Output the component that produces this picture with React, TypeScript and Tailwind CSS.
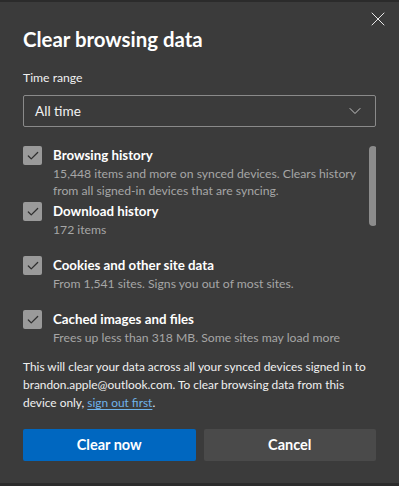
import { X, ChevronDown, Check } from "lucide-react";

const items = [
  {
    title: "Browsing history",
    desc: "15,448 items and more on synced devices. Clears history from all signed-in devices that are syncing.",
  },
  { title: "Download history", desc: "172 items" },
  { title: "Cookies and other site data", desc: "From 1,541 sites. Signs you out of most sites." },
  { title: "Cached images and files", desc: "Frees up less than 318 MB. Some sites may load more slowly on your next visit." },
];

function Item({ title, desc, gap }: { title: string; desc: string; gap: string }) {
  return (
    <div className={`flex gap-[11px] ${gap}`}>
      <span className="mt-[1px] flex h-[19px] w-[19px] shrink-0 items-center justify-center rounded-[2px] bg-[#9a9a9a]">
        <Check className="h-[14px] w-[14px] text-[#2f2f2f]" strokeWidth={2.2} />
      </span>
      <div className="min-w-0 pr-[20px]">
        <p className="text-[13.3px] font-bold leading-[20px] text-white">{title}</p>
        <p className="text-[12.2px] leading-[17px] text-[#a6a6a6]">{desc}</p>
      </div>
    </div>
  );
}

export default function App() {
  return (
    <div
      className="flex h-[486px] w-[399px] flex-col bg-[#3b3b3b] text-white"
      style={{ fontFamily: 'Lato, "Noto Sans", sans-serif' }}
    >
      <div className="h-[2px] w-full bg-[#2b2b2b]" />
      <div className="relative flex flex-1 flex-col px-[23px] pt-[24px]">
        <button className="absolute right-[9px] top-[5px] text-[#e8e8e8]">
          <X className="h-[24px] w-[24px]" strokeWidth={1} />
        </button>
        <h1 className="text-[20.4px] font-bold leading-[26px]">Clear browsing data</h1>

        <p className="mt-[17px] text-[12.2px] leading-[18px] text-[#f0f0f0]">Time range</p>
        <div className="mt-[8px] flex h-[32px] items-center justify-between rounded-[2px] border border-[#8a8a8a] pl-[11px] pr-[10px]">
          <span className="text-[13.6px] text-[#f2f2f2]">All time</span>
          <ChevronDown className="h-[20px] w-[20px] text-[#d0d0d0]" strokeWidth={1.1} />
        </div>

        <div className="relative mt-[18px] h-[205px] overflow-hidden">
          <div className="absolute right-[-1px] top-[1px] h-[80px] w-[8px] rounded-full bg-[#8c8c8c]" />
          <Item title={items[0].title} desc={items[0].desc} gap="" />
          <Item title={items[1].title} desc={items[1].desc} gap="mt-[2px]" />
          <Item title={items[2].title} desc={items[2].desc} gap="mt-[17px]" />
          <Item title={items[3].title} desc={items[3].desc} gap="mt-[17px]" />
        </div>

        <p className="mt-[8px] text-[11.9px] leading-[18px] text-[#f0f0f0]">
          This will clear your data across all your synced devices signed in to brandon.apple@outlook.com. To clear
          browsing data from this device only,{" "}
          <a className="text-[#6fb3ea] underline underline-offset-2">sign out first</a>.
        </p>

        <div className="mt-[17px] grid grid-cols-2 gap-[8px]">
          <button className="h-[32px] rounded-[2px] bg-[#0067c0] text-[14.5px] font-bold text-white">Clear now</button>
          <button className="h-[32px] rounded-[2px] bg-[#4a4a4a] text-[14.5px] font-bold text-white">Cancel</button>
        </div>
      </div>
      <div className="h-[3px] w-full bg-[#2b2b2b]" />
    </div>
  );
}
